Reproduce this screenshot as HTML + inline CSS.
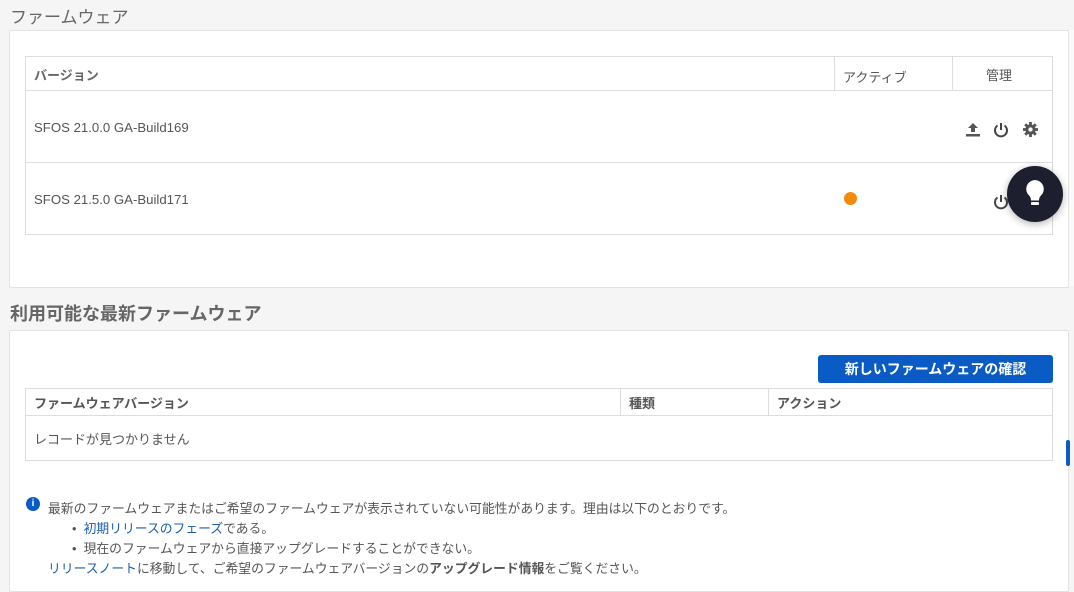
<!DOCTYPE html><html><head><meta charset="utf-8"><style>
body{margin:0;width:1074px;height:584px;background:#f5f5f5;font-family:"Liberation Sans","Noto Sans CJK JP",sans-serif;color:#555;position:relative;overflow:hidden}
.a{position:absolute}
.panel{background:#fff;border:1px solid #e2e2e2;border-radius:2px}
.t{border:1px solid #ddd;background:#fff}
.h{font-size:17px;color:#666}
.s{font-size:13px;color:#555}
.i{font-size:12.8px;color:#555}
.ln{background:#ddd}
a{color:#1a5fa8;text-decoration:none}
</style></head><body>
<div class="a h" style="left:10px;top:3px">ファームウェア</div>
<div class="a panel" style="left:9px;top:30px;width:1058px;height:256px"></div>
<div class="a" style="left:1068px;top:30px;width:6px;height:256px;border-left:1px solid #e5e5e5;background:#fafafa"></div>
<div class="a t" style="left:25px;top:56px;width:1026px;height:177px"></div>
<div class="a ln" style="left:25px;top:90px;width:1027px;height:1px"></div>
<div class="a ln" style="left:25px;top:162px;width:1027px;height:1px"></div>
<div class="a ln" style="left:834px;top:56px;width:1px;height:34px"></div>
<div class="a ln" style="left:952px;top:56px;width:1px;height:34px"></div>
<div class="a s" style="left:34px;top:65px;font-weight:bold;color:#666">バージョン</div>
<div class="a s" style="left:843px;top:67px">アクティブ</div>
<div class="a s" style="left:986px;top:65px">管理</div>
<div class="a s" style="left:34px;top:120px;font-size:13.2px">SFOS 21.0.0 GA-Build169</div>
<div class="a s" style="left:34px;top:192px;font-size:13.2px">SFOS 21.5.0 GA-Build171</div>
<div class="a" style="left:844px;top:192px;width:13px;height:13px;border-radius:50%;background:#f28a0c"></div>
<svg class="a" style="left:964px;top:121px" width="18" height="18" viewBox="0 0 18 18"><path d="M9 2l5 5h-3v4H7V7H4z" fill="#555"/><rect x="2" y="13" width="14" height="2.5" fill="#555"/></svg>
<svg class="a" style="left:993px;top:121px" width="16" height="17" viewBox="0 0 16 17"><path d="M4.5 4.5a6 6 0 1 0 7 0" fill="none" stroke="#444" stroke-width="2"/><path d="M8 2v7" stroke="#444" stroke-width="2"/></svg>
<svg class="a" style="left:1023px;top:122px" width="15" height="15" viewBox="0 0 16 16"><g fill="#555"><circle cx="8" cy="8" r="5.5"/><rect x="6.5" y="0" width="3" height="16"/><rect x="0" y="6.5" width="16" height="3"/><rect x="6.5" y="0" width="3" height="16" transform="rotate(45 8 8)"/><rect x="6.5" y="0" width="3" height="16" transform="rotate(-45 8 8)"/></g><circle cx="8" cy="8" r="2.3" fill="#fff"/></svg>
<svg class="a" style="left:993px;top:193px" width="16" height="17" viewBox="0 0 16 17"><path d="M4.5 4.5a6 6 0 1 0 7 0" fill="none" stroke="#444" stroke-width="2"/><path d="M8 2v7" stroke="#444" stroke-width="2"/></svg>
<div class="a" style="left:1007px;top:166px;width:56px;height:56px;border-radius:50%;background:#1d1f2e;box-shadow:0 2px 8px rgba(0,0,0,.3)"></div>
<svg class="a" style="left:1023px;top:178px" width="24" height="32" viewBox="0 0 24 32"><path d="M12 2a9 9 0 0 0-6 15.5c1.5 1.5 2 3 2 5h8c0-2 .5-3.5 2-5A9 9 0 0 0 12 2z" fill="#fff"/><rect x="8" y="24" width="8" height="3" rx="1" fill="#fff"/></svg>

<div class="a h" style="left:10px;top:300px;font-weight:bold;font-size:18px">利用可能な最新ファームウェア</div>
<div class="a panel" style="left:9px;top:330px;width:1058px;height:260px"></div>
<div class="a" style="left:818px;top:355px;width:235px;height:28px;background:#0a5bc4;border-radius:3px;color:#fff;font-size:14px;font-weight:bold;text-align:center;line-height:28px">新しいファームウェアの確認</div>
<div class="a" style="left:1066px;top:440px;width:4px;height:26px;background:#0a5bc4;border-radius:2px"></div>
<div class="a t" style="left:25px;top:388px;width:1026px;height:71px"></div>
<div class="a ln" style="left:25px;top:415px;width:1027px;height:1px"></div>
<div class="a ln" style="left:620px;top:388px;width:1px;height:27px"></div>
<div class="a ln" style="left:768px;top:388px;width:1px;height:27px"></div>
<div class="a s" style="left:34px;top:393px;font-weight:bold">ファームウェアバージョン</div>
<div class="a s" style="left:629px;top:393px;font-weight:bold">種類</div>
<div class="a s" style="left:777px;top:393px;font-weight:bold">アクション</div>
<div class="a s" style="left:34px;top:429px">レコードが見つかりません</div>
<div class="a" style="left:26px;top:497px;width:14px;height:14px;border-radius:50%;background:#0a5bc4;color:#fff;font-size:10px;font-weight:bold;text-align:center;line-height:14px">i</div>
<div class="a i" style="left:48px;top:498px">最新のファームウェアまたはご希望のファームウェアが表示されていない可能性があります。理由は以下のとおりです。</div>
<div class="a i" style="left:72px;top:518px">• &nbsp;<a>初期リリースのフェーズ</a>である。</div>
<div class="a i" style="left:72px;top:538px">• &nbsp;現在のファームウェアから直接アップグレードすることができない。</div>
<div class="a i" style="left:48px;top:558px"><a>リリースノート</a>に移動して、ご希望のファームウェアバージョンの<b>アップグレード情報</b>をご覧ください。</div>
</body></html>
